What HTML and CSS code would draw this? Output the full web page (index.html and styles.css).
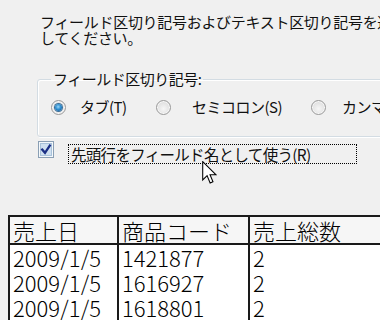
FILE: index.html
```html
<!DOCTYPE html>
<html lang="ja">
<head>
<meta charset="utf-8">
<title>テキスト インポート ウィザード</title>
<link rel="stylesheet" href="styles.css">
</head>
<body>
<div class="wizard">
  <p class="intro">フィールド区切り記号およびテキスト区切り記号を選択<br>してください。</p>
  <fieldset class="group">
    <legend class="legend">フィールド区切り記号:</legend>
    <div class="options">
      <label class="opt opt-tab"><span class="radio on"></span><span class="lbl">タブ(T)</span></label>
      <label class="opt opt-semi"><span class="radio"></span><span class="lbl">セミコロン(S)</span></label>
      <label class="opt opt-comma"><span class="radio"></span><span class="lbl">カンマ(C)</span></label>
    </div>
  </fieldset>
  <div class="check-row">
    <span class="check">
      <svg width="16" height="17" viewBox="0 0 16 17">
        <rect x="0.5" y="0.5" width="15" height="16" fill="#f4f8fb" stroke="#8a9fb4"/>
        <rect x="2.5" y="2.5" width="11" height="12" fill="#cfe0f0" stroke="#a9c2da"/>
        <path d="M4.2 8.6 L7 11.8 L11.8 4.6" fill="none" stroke="#1b2f86" stroke-width="2.3" stroke-linecap="square"/>
      </svg>
    </span>
    <span class="check-label">先頭行をフィールド名として使う(R)</span>
  </div>
  <table class="preview">
    <thead>
      <tr><th class="c1">売上日</th><th class="c2">商品コード</th><th class="c3">売上総数</th></tr>
    </thead>
    <tbody>
      <tr><td>2009/1/5</td><td>1421877</td><td>2</td></tr>
      <tr><td>2009/1/5</td><td>1616927</td><td>2</td></tr>
      <tr><td>2009/1/5</td><td>1618801</td><td>2</td></tr>
    </tbody>
  </table>
</div>
<svg class="cursor" width="15" height="23" viewBox="0 0 12.5 19.5">
  <path d="M0.5 0.5 L0.5 16 L4.2 12.4 L6.8 18.6 L9.2 17.6 L6.7 11.6 L11.6 11.6 Z" fill="#fff" stroke="#000" stroke-width="0.9" stroke-linejoin="miter"/>
</svg>
</body>
</html>
```

FILE: styles.css
```css
html, body {
  margin: 0;
  padding: 0;
}
body {
  width: 380px;
  height: 320px;
  overflow: hidden;
  background: #f0f0f0;
  position: relative;
  font-family: "Noto Sans CJK JP", "Noto Sans", sans-serif;
  color: #111;
}
.wizard {
  width: 380px;
  height: 320px;
  overflow: hidden;
}
.intro {
  margin: 0;
  padding: 14px 0 0 40px;
  font-size: 15px;
  line-height: 16px;
  letter-spacing: -0.3px;
  white-space: nowrap;
}
.group {
  margin: 25px 0 0 37px;
  padding: 12px 0 21px 13px;
  width: 420px;
  border: 1px solid #d3dce3;
  border-radius: 3px;
  box-shadow: inset 1px 1px 0 #fff, 1px 1px 0 #fff;
  box-sizing: border-box;
}
.legend {
  padding: 0 2px;
  font-size: 15px;
  line-height: 16px;
  letter-spacing: -0.5px;
}
.options {
  display: flex;
  align-items: center;
  height: 16px;
  font-size: 15px;
  letter-spacing: -0.5px;
  white-space: nowrap;
}
.opt {
  display: flex;
  align-items: center;
  flex: none;
}
.opt-tab { width: 105px; }
.opt-semi { width: 155px; }
.opt-tab .radio { margin-right: 14px; }
.opt-semi .radio { margin-right: 21px; }
.opt-comma .radio { margin-right: 16px; }
.lbl {
  line-height: 16px;
}
.radio {
  position: relative;
  width: 15px;
  height: 15px;
  box-sizing: border-box;
  border-radius: 50%;
  border: 1px solid #9a9a9a;
  background: radial-gradient(circle at 50% 60%, #f6f6f6 0%, #e4e4e4 55%, #cfcfcf 100%);
  box-shadow: inset 0 0 0 1px #f8f8f8;
  flex: none;
}
.radio.on::after {
  content: "";
  position: absolute;
  left: 3px;
  top: 3px;
  width: 7px;
  height: 7px;
  border-radius: 50%;
  background: radial-gradient(circle at 45% 40%, #9ad6f7 0%, #2f8fd0 45%, #0b4c8c 100%);
  box-shadow: 0 0 0 1px #3b6d96;
}
.check-row {
  display: flex;
  align-items: flex-start;
  margin: 4px 0 0 38px;
  height: 24px;
}
.check {
  display: block;
  width: 16px;
  height: 17px;
  flex: none;
}
.check svg { display: block; }
.check-label {
  margin: 3px 0 0 14px;
  width: 289px;
  height: 20px;
  box-sizing: border-box;
  border: 1px dotted #000;
  padding-left: 2px;
  font-size: 15.5px;
  line-height: 18px;
  letter-spacing: -0.7px;
  white-space: nowrap;
}
.preview {
  margin: 50px 0 0 8px;
  border-collapse: collapse;
  border: 2px solid #1a1a1a;
  background: #fff;
  width: 520px;
  table-layout: fixed;
  font-size: 22px;
  font-weight: 300;
  color: #000;
}
.preview th, .preview td {
  padding: 0 0 0 3px;
  text-align: left;
  font-weight: 300;
  white-space: nowrap;
  overflow: hidden;
  border-left: 2px solid #1a1a1a;
  border-right: 2px solid #1a1a1a;
}
.preview th {
  height: 26px;
  line-height: 26px;
  background: #f6f6f6;
  border-bottom: 2px solid #1a1a1a;
}
.preview td {
  height: 25px;
  line-height: 25px;
}
.c1 { width: 104px; }
.c2 { width: 126px; }
.cursor {
  position: absolute;
  left: 202px;
  top: 161px;
}
```
